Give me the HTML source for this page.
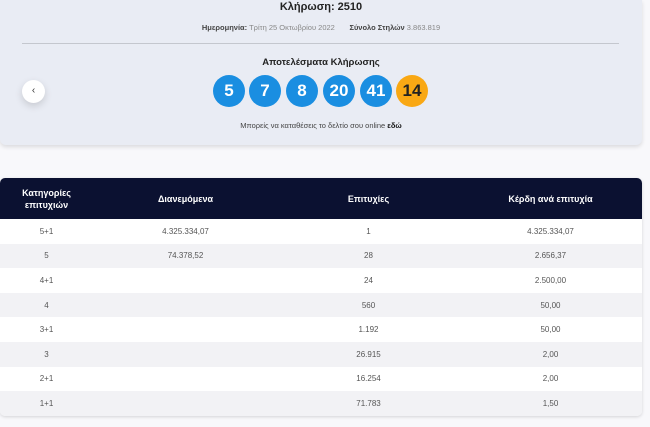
<!DOCTYPE html>
<html><head><meta charset="utf-8"><style>
*{margin:0;padding:0;box-sizing:border-box}
body{width:650px;height:427px;background:#f8f8fb;font-family:"Liberation Sans","Noto Sans CJK SC",sans-serif;position:relative;overflow:hidden;color:#222}
.card{position:absolute;left:0;top:0;width:642px;height:145px;background:#e9ecf4;border-radius:0 0 6px 6px;box-shadow:0 2px 4px rgba(0,0,0,.12)}
.t{position:absolute;width:100%;text-align:center}
.ball{position:absolute;top:75px;width:32px;height:32px;border-radius:50%;background:#1a8ee1;color:#fff;font-weight:bold;font-size:17px;line-height:32px;text-align:center}
.back{position:absolute;left:22px;top:80px;width:23px;height:23px;border-radius:50%;background:#fff;box-shadow:0 3px 8px rgba(0,0,0,.15);font-size:10px;text-align:center;line-height:22px;color:#333}
table{position:absolute;left:0;top:178px;width:642px;border-collapse:collapse;border-radius:5px;overflow:hidden;box-shadow:0 1px 3px rgba(0,0,0,.15);font-size:8px;color:#555}
th{background:#0b1131;color:#fff;font-size:9px;font-weight:bold;height:41px;line-height:12px}
td{height:24.6px;text-align:center}
tr:nth-child(odd) td{background:#f2f2f5}
tr:nth-child(even) td{background:#fff}
</style></head><body>
<div class="card">
<div class="t" style="top:1px;font-size:11px;font-weight:bold">Κλήρωση: 2510</div>
<div class="t" style="top:23px;font-size:7.5px;color:#888"><b style="color:#444">Ημερομηνία:</b> Τρίτη 25 Οκτωβρίου 2022 &nbsp;&nbsp;&nbsp;&nbsp;&nbsp; <b style="color:#444">Σύνολο Στηλών</b> 3.863.819</div>
<div style="position:absolute;left:22px;top:43px;width:597px;height:1px;background:#c4c7ce"></div>
<div class="t" style="top:57px;font-size:9.5px;font-weight:bold">Αποτελέσματα Κλήρωσης</div>
<div class="back">‹</div>
<div class="ball" style="left:213px">5</div>
<div class="ball" style="left:249px">7</div>
<div class="ball" style="left:286px">8</div>
<div class="ball" style="left:323px">20</div>
<div class="ball" style="left:360px">41</div>
<div class="ball" style="left:396px;background:#f9a814;color:#222">14</div>
<div class="t" style="top:121px;font-size:7.5px;color:#444">Μπορείς να καταθέσεις το δελτίο σου online <b style="color:#111">εδώ</b></div>
</div>
<table>
<tr><th style="width:93px">Κατηγορίες<br>επιτυχιών</th><th style="width:185px">Διανεμόμενα</th><th style="width:181px">Επιτυχίες</th><th>Κέρδη ανά επιτυχία</th></tr>
<tr><td>5+1</td><td>4.325.334,07</td><td>1</td><td>4.325.334,07</td></tr>
<tr><td>5</td><td>74.378,52</td><td>28</td><td>2.656,37</td></tr>
<tr><td>4+1</td><td></td><td>24</td><td>2.500,00</td></tr>
<tr><td>4</td><td></td><td>560</td><td>50,00</td></tr>
<tr><td>3+1</td><td></td><td>1.192</td><td>50,00</td></tr>
<tr><td>3</td><td></td><td>26.915</td><td>2,00</td></tr>
<tr><td>2+1</td><td></td><td>16.254</td><td>2,00</td></tr>
<tr><td>1+1</td><td></td><td>71.783</td><td>1,50</td></tr>
</table>
</body></html>
